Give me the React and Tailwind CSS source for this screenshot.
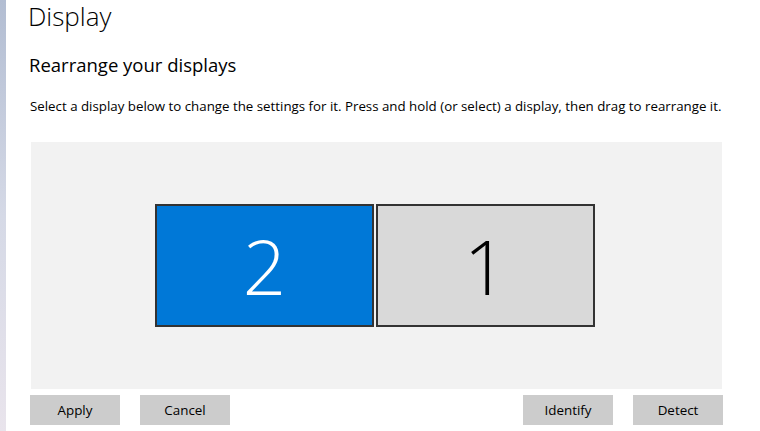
import React from 'react';

const font = { fontFamily: '"Open Sans", "Noto Sans", "Liberation Sans", sans-serif' };

function Monitor({ label, active }) {
    return (
        <div
            className={`w-[219px] h-[123px] border-2 border-[#333333] flex items-center justify-center ${active ? 'bg-[#0078d7] text-white' : 'bg-[#d9d9d9] text-black'}`}
        >
            <span className="text-[76px] leading-none font-light">{label}</span>
        </div>
    );
}

function Btn({ children }) {
    return (
        <button className="w-[90px] h-[30px] bg-[#cccccc] text-[13.4px] text-black flex items-center justify-center">
            {children}
        </button>
    );
}

export default function App() {
    return (
        <div className="flex w-[760px] h-[431px] bg-white overflow-hidden" style={font}>
            <div className="w-[6px] shrink-0 bg-gradient-to-b from-[#b2bdd2] via-[#d5d9e6] to-[#e9e4ec]"></div>
            <div className="flex-1 pl-[24px] pr-[37px]">
                <h1 className="text-[26px] leading-[32px] font-light text-black ml-[-2px]">Display</h1>
                <h2 className="text-[18.5px] leading-[26px] text-black mt-[20px] ml-[-1px]">Rearrange your displays</h2>
                <p className="text-[13.3px] leading-[20px] text-black mt-[18px] whitespace-nowrap">
                    Select a display below to change the settings for it. Press and hold (or select) a display, then drag to rearrange it.
                </p>
                <div className="mt-[26px] ml-[1px] w-[691px] h-[247px] bg-[#f2f2f2] flex items-center justify-center gap-[2px] pr-[3px]">
                    <Monitor label="2" active />
                    <Monitor label="1" />
                </div>
                <div className="mt-[6px] w-[693px] flex justify-between">
                    <div className="flex gap-[20px]">
                        <Btn>Apply</Btn>
                        <Btn>Cancel</Btn>
                    </div>
                    <div className="flex gap-[20px]">
                        <Btn>Identify</Btn>
                        <Btn>Detect</Btn>
                    </div>
                </div>
            </div>
        </div>
    );
}
